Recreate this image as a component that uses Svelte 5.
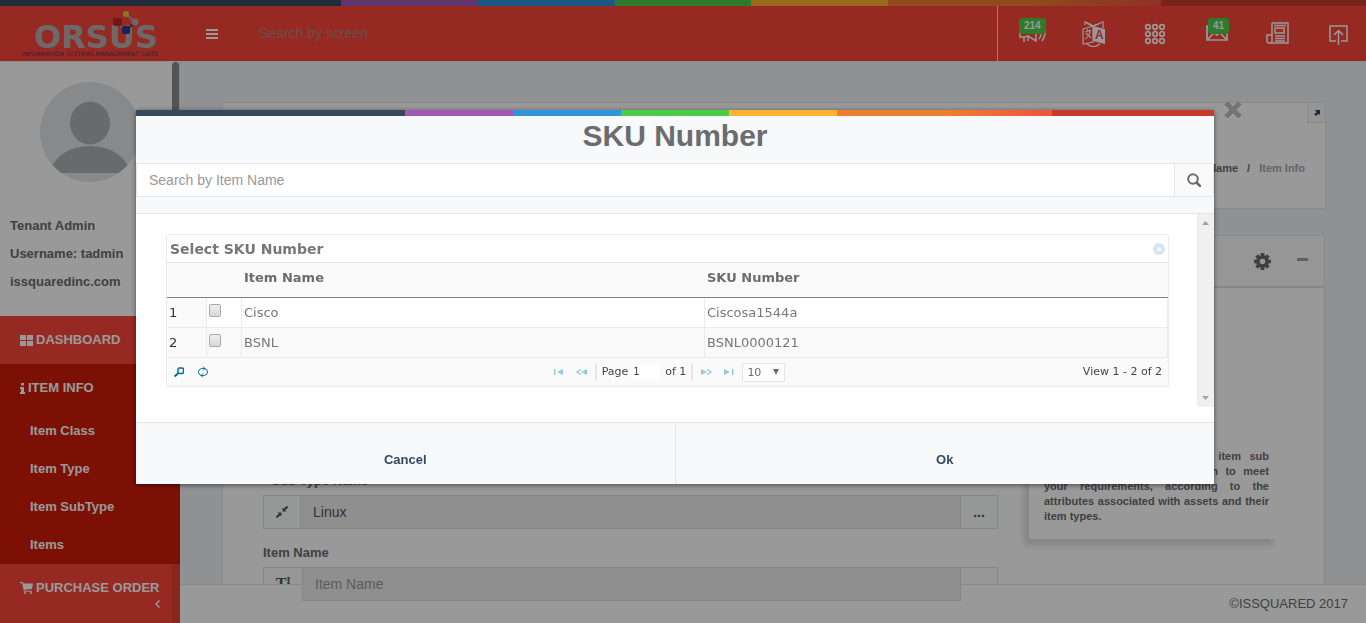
<script lang="ts">
  const subItems = ['Item Class', 'Item Type', 'Item SubType', 'Items'];
  const rows = [
    { id: 1, name: 'Cisco', sku: 'Ciscosa1544a' },
    { id: 2, name: 'BSNL', sku: 'BSNL0000121' }
  ];
  let checked = $state<Record<number, boolean>>({ 1: false, 2: false });
  let query = $state('');
  let page = $state('1');
</script>

<div class="page">
  <div class="strip"></div>
  <header>
    <a class="logo" href="#home" aria-label="Orsus home">
      <svg viewBox="0 0 180 55" width="180" height="55">
        <text x="34" y="42" class="word">ORSUS</text>
        <g stroke="#a8a0a8" stroke-width="2">
          <path d="M126 8l9 8M117 16l9 9" />
          <path d="M135 16l-9 9" stroke="#30439b" />
        </g>
        <rect x="113" y="12" width="9" height="8" rx="2" fill="#b82c22" />
        <circle cx="126" cy="8" r="3" fill="#f0c040" />
        <circle cx="135" cy="16" r="3.5" fill="#b5aaa5" />
        <rect x="122" y="20" width="8" height="8" rx="2" fill="#293a8c" />
        <text x="22" y="50" class="tag">INFORMATION SYSTEMS MANAGEMENT SUITE</text>
      </svg>
    </a>
    <button class="burger" aria-label="Toggle menu"><i></i><i></i><i></i></button>
    <input class="screen-search" type="text" placeholder="Search by screen" aria-label="Search by screen" />
    <nav class="tools" aria-label="Tools">
      <button aria-label="Announcements">
        <svg width="28" height="24" viewBox="0 0 28 24" fill="none" stroke="#fff" stroke-width="1.5">
          <path d="M1 8v7h4v5M5 15l4-1v5M9 14l8 5V5M20 17q3-4 2-9M23 19q4-6 3-12" />
        </svg>
        <span class="badge">214</span>
      </button>
      <button aria-label="Language">
        <svg width="24" height="26" viewBox="0 0 24 26" fill="none" stroke="#fff" stroke-width="1.2">
          <path d="M1 8l10-3v16L1 23zM3 4V1l7 3M11 5l10-4v6" />
          <path d="M3 1l8 4 6-2-7 2z" fill="#fff" />
          <path d="M11 5l12 3v15l-12-3z" fill="#fff" stroke="none" />
          <path d="M3 11l6-2M5 8l1 2M8 10q-1 6-5 8M4 12l5 5M5 23q6 5 13 0" />
          <text x="13" y="18" class="lang">A</text>
        </svg>
      </button>
      <button aria-label="Applications">
        <svg width="22" height="22" viewBox="0 0 22 22" fill="none" stroke="#fff" stroke-width="1.7">
          {#each [4, 11, 18] as y}{#each [4, 11, 18] as x}<circle cx={x} cy={y} r="2.3" />{/each}{/each}
        </svg>
      </button>
      <button aria-label="Messages">
        <svg width="24" height="20" viewBox="0 0 24 20" fill="none" stroke="#fff" stroke-width="1.7">
          <path d="M2 2h20v14H2zM2 2l10 9L22 2M2 16l7-7M22 16l-7-7" />
        </svg>
        <span class="badge mail">41</span>
      </button>
      <button aria-label="News">
        <svg width="24" height="24" viewBox="0 0 24 24" fill="none" stroke="#fff" stroke-width="1.5">
          <path d="M6 1h16v20H3q-2 0-2-2v-6h5M6 1v18q0 2-2 2M9 6h9v5H9zM8 3.500h12M9 14h10M9 16.500h10M9 19h10" />
        </svg>
      </button>
      <button aria-label="Log out">
        <svg width="22" height="24" viewBox="0 0 22 24" fill="none" stroke="#fff" stroke-width="1.5">
          <path d="M8 19H2V4h17v15h-6M10.500 23V9M6 13l4.500-4.500L15 13" />
        </svg>
      </button>
    </nav>
  </header>

  <div class="shell">
    <aside>
      <div class="profile">
        <svg class="avatar" width="100" height="100" viewBox="0 0 100 100">
          <defs><clipPath id="round"><circle cx="50" cy="50" r="50" /></clipPath></defs>
          <circle cx="50" cy="50" r="50" fill="#e3e5e6" />
          <g clip-path="url(#round)" fill="#adb3b5">
            <ellipse cx="50" cy="41" rx="20" ry="21.500" />
            <path d="M8 91q12-27 42-27t42 27z" />
          </g>
        </svg>
        <p>Tenant Admin</p>
        <p>Username: tadmin</p>
        <p>issquaredinc.com</p>
        <span class="thumb"></span>
      </div>
      <nav class="menu" aria-label="Main">
        <a href="#dashboard">
          <svg width="13" height="11" viewBox="0 0 13 11" fill="#fff"><path d="M0 0h6v5H0zM7 0h6v5H7zM0 6h6v5H0zM7 6h6v5H7z" /></svg>
          DASHBOARD
        </a>
        <div class="open">
          <a href="#item-info">
            <svg width="5" height="11" viewBox="0 0 5 11" fill="#fff"><path d="M1 0h3v2.500H1zM0 4h4v5h1v2H0V9h1V6H0z" /></svg>
            ITEM INFO
          </a>
          {#each subItems as item}
            <a class="sub" href="#item">{item}</a>
          {/each}
        </div>
        <a class="order" href="#purchase">
          <svg width="13" height="12" viewBox="0 0 13 12" fill="#fff"><path d="M0 0h3l.4 1.500H13L12 7l-7.500.8.3 1H12v1H4L2.200 1.200H0z" /><circle cx="5" cy="11" r="1" /><circle cx="11" cy="11" r="1" /></svg>
          PURCHASE ORDER
        </a>
        <svg class="chev" width="5" height="8" viewBox="0 0 5 8" fill="none" stroke="#fff" stroke-width="1.5"><path d="M4.500.5L1 4l3.500 3.500" /></svg>
      </nav>
    </aside>

    <main>
      <section class="crumbs">
        <button class="expand" aria-label="Expand">
          <svg width="6" height="6" viewBox="0 0 7 7" fill="#34495e"><path d="M1 0h6v6L5.200 4.300 2.500 7 0 5l3-2.500z" /></svg>
        </button>
        <nav aria-label="Breadcrumb"><a href="#name">Name</a><b>/</b><span>Item Info</span></nav>
      </section>

      <section class="panel">
        <div class="panel-head">
          <button aria-label="Settings">
            <svg width="17" height="17" viewBox="0 0 16 16">
              <g stroke="#6a6c6f" stroke-width="3.500"><path d="M8 0v16M0 8h16M2.400 2.400l11.200 11.200M13.600 2.400L2.400 13.600" /></g>
              <circle cx="8" cy="8" r="4.500" fill="none" stroke="#6a6c6f" stroke-width="3" /><circle cx="8" cy="8" r="2.600" fill="#fbfbfb" />
            </svg>
          </button>
          <button aria-label="Collapse"><i></i></button>
        </div>
        <div class="panel-body">
          <form>
            <label for="subtype"><em>*</em> Sub Type Name</label>
            <div class="group">
              <span class="addon">
                <svg width="12" height="12" viewBox="0 0 12 12" fill="#555" stroke="#555"><path d="M6.500 1.500v4h4zM5.500 10.500v-4h-4z" stroke="none" /><path d="M8 4l3.500-3.500M4 8L.5 11.500" stroke-width="2" /></svg>
              </span>
              <input id="subtype" type="text" value="Linux" readonly />
              <button class="addon more" type="button" aria-label="Browse sub types">...</button>
            </div>
            <label for="itemname">Item Name</label>
            <div class="group">
              <span class="addon wide">T<small>I</small></span>
              <input id="itemname" type="text" placeholder="Item Name" readonly />
              <span class="addon more"></span>
            </div>
          </form>
          <div class="info">
            <p class="fill">Select the proper item type, item sub</p>
            <p class="fill">type and further customization to meet</p>
            <p>your requirements, according to the attributes associated with assets and their item types.</p>
          </div>
        </div>
      </section>
      <footer>©ISSQUARED 2017</footer>
    </main>
  </div>
</div>

<div class="overlay">
  <div class="modal" role="dialog" aria-modal="true" aria-labelledby="title">
    <div class="strip"></div>
    <button class="close" aria-label="Close">
      <svg width="20" height="20" viewBox="0 0 20 20" fill="none" stroke-width="5"><path d="M3 4l14 14M17 4L3 18" stroke="#aaa" /><path d="M3 3l14 14M17 3L3 17" stroke="#747474" /></svg>
    </button>
    <div class="modal-head">
      <h1 id="title">SKU Number</h1>
      <div class="finder">
        <input type="text" placeholder="Search by Item Name" aria-label="Search by Item Name" bind:value={query} />
        <button aria-label="Search">
          <svg width="14" height="14" viewBox="0 0 14 14" fill="none" stroke="#6a6c6f"><circle cx="6" cy="6" r="4.800" stroke-width="2" /><path d="M9.500 9.500L13 13" stroke-width="2.500" stroke-linecap="round" /></svg>
        </button>
      </div>
    </div>
    <div class="modal-body">
      <div class="content">
        <div class="grid">
          <div class="grid-title">
            <span>Select SKU Number</span>
            <button aria-label="Collapse table">
              <svg width="12" height="12" viewBox="0 0 12 12"><circle cx="6" cy="6" r="6" fill="#d4e6f2" /><path d="M3 7.500l3-3.500 3 3.500z" fill="#fff" /></svg>
            </button>
          </div>
          <table>
            <colgroup><col class="c-no" /><col class="c-tick" /><col /><col /></colgroup>
            <thead><tr><th></th><th></th><th>Item Name</th><th>SKU Number</th></tr></thead>
            <tbody>
              {#each rows as row}
                <tr>
                  <td class="no">{row.id}</td>
                  <td class="tick"><input type="checkbox" aria-label={row.name} bind:checked={checked[row.id]} /></td>
                  <td>{row.name}</td>
                  <td>{row.sku}</td>
                </tr>
              {/each}
            </tbody>
          </table>
          <div class="pager">
            <div class="acts">
              <button aria-label="Find records"><svg width="10" height="10" viewBox="0 0 10 10" fill="none" stroke="#00719c"><rect x="4" y="1" width="5.500" height="5.500" rx="1.500" stroke-width="1.500" /><path d="M4 6.500L.5 9.500" stroke-width="2" /></svg></button>
              <button aria-label="Reload"><svg width="10" height="12" viewBox="0 0 10 12" fill="none" stroke="#00719c"><path d="M3.500 9.500Q.5 9 .5 6t3-3.500h3M5 .5l2 2-2 2M6.500 2.500Q9.500 3 9.500 6t-3 3.500h-3M5 7.500l-2 2 2 2" /></svg></button>
            </div>
            <div class="pages">
              <button aria-label="First page"><svg width="10" height="6" viewBox="0 0 10 6" fill="#9cc9d8"><path d="M0 0h1.500v6H0zM9 0v6L3 3z" /></svg></button>
              <button aria-label="Previous page"><svg width="11" height="6" viewBox="0 0 11 6" fill="#9cc9d8"><path d="M11 0v6L5 3z" /><path d="M5 .5L1 3l4 2.500" fill="none" stroke="#9cc9d8" stroke-width="1.300" /></svg></button>
              <i></i>
              <label>Page <input type="text" bind:value={page} /></label>
              <span>of 1</span>
              <i></i>
              <button aria-label="Next page"><svg width="11" height="6" viewBox="0 0 11 6" fill="#9cc9d8"><path d="M0 0v6l6-3z" /><path d="M6 .5L10 3 6 5.500" fill="none" stroke="#9cc9d8" stroke-width="1.300" /></svg></button>
              <button aria-label="Last page"><svg width="10" height="6" viewBox="0 0 10 6" fill="#9cc9d8"><path d="M8 0h1.500v6H8zM0 0v6l6-3z" /></svg></button>
              <div class="size">
                <select aria-label="Rows per page"><option>10</option><option>20</option><option>30</option></select>
                <svg width="6" height="6" viewBox="0 0 6 6" fill="#6a6c6f"><path d="M0 0h6L3 6z" /></svg>
              </div>
            </div>
            <span class="count">View 1 - 2 of 2</span>
          </div>
        </div>
      </div>
      <div class="scroll" aria-hidden="true">
        <svg width="7" height="4" viewBox="0 0 7 4" fill="#a3a3a3"><path d="M0 4h7L3.500 0z" /></svg>
        <svg width="7" height="4" viewBox="0 0 7 4" fill="#a3a3a3"><path d="M0 0h7L3.500 4z" /></svg>
      </div>
    </div>
    <div class="modal-foot">
      <button>Cancel</button>
      <button>Ok</button>
    </div>
  </div>
</div>

<style>
  :global(body) {
    margin: 0;
    overflow: hidden;
    font: 13px/20px "Liberation Sans", Arial, sans-serif;
    color: #6a6c6f;
  }
  * { box-sizing: border-box; }
  button { border: 0; padding: 0; background: none; font: inherit; color: inherit; display: flex; align-items: center; justify-content: center; }
  input, select { font: inherit; color: inherit; border: 0; border-radius: 0; outline: 0; }
  a { color: inherit; text-decoration: none; }
  p { margin: 0; }
  svg { display: block; flex: none; }

  .page { height: 100vh; display: flex; flex-direction: column; overflow: hidden; background: #f0f2f4; }
  .strip {
    height: 6px;
    flex: none;
    background: linear-gradient(to right, #34495e 25%, #a259b3 25%, #a259b3 35%, #2f95d9 35%, #2f95d9 45%, #4dcc48 45%, #4dcc48 55%, #ffb330 55%, #ffb330 65%, #ed7f30 65%, #ed7f30 75%, #f0523e 85%, #c63a2c 85%);
  }

  header { height: 55px; flex: none; display: flex; align-items: stretch; background: #fb4639; color: #fff; }
  .word { font: bold 32px "DejaVu Sans", sans-serif; fill: #b8b0b0; }
  .tag { font: 6px "DejaVu Sans", sans-serif; fill: #5b3068; }
  .lang { font: bold 12px "Liberation Sans", sans-serif; fill: #fb4639; stroke: none; }
  .burger { width: 64px; flex-direction: column; gap: 2px; }
  .burger i { width: 12px; height: 2px; background: #fff; }
  .screen-search { flex: 1; min-width: 0; padding: 0 15px 2px; background: none; font-size: 14px; }
  .screen-search::placeholder { color: #a88482; }
  .tools { width: 369px; border-left: 1px solid #e8e0e0; display: grid; grid-template-columns: repeat(6, 1fr); }
  .tools button { position: relative; padding-left: 8px; }
  .badge { position: absolute; top: 12px; left: 21px; padding: 0 5px; border-radius: 3px; background: #4dcc48; font: bold 10px/16px "Liberation Sans", sans-serif; }
  .badge.mail { left: 26px; }

  .shell { flex: 1; min-height: 0; display: flex; border-top: 1px solid #eaeaea; }
  aside { width: 180px; flex: none; display: flex; flex-direction: column; background: #fff; color: #6a6c6f; font-weight: bold; }
  .profile { position: relative; height: 254px; flex: none; padding: 20px 0 0 10px; line-height: 28px; border-right: 1px solid #e4e5e7; }
  .avatar { margin: 0 0 30px 30px; }
  .thumb { position: absolute; top: 0; right: 0; width: 7px; height: 170px; border-radius: 7px; background: #8c8c8c; }
  .menu { flex: 1; background: #fb4639; color: #fff; border-right: 8px solid #e74034; }
  .menu a { display: flex; align-items: center; gap: 3px; height: 48px; padding-left: 20px; }
  .menu > a { margin-right: -8px; }
  .menu .open { height: 200px; margin-right: -8px; background: #cf1b09; }
  .menu a.sub { height: 38px; padding-left: 30px; }
  .chev { margin: -12px 0 0 155px; }

  main { position: relative; flex: 1; min-width: 0; padding: 40px 40px 0 42px; }
  .crumbs { height: 107px; border: 1px solid #e4e5e7; background: #fff; display: flex; flex-direction: column; align-items: flex-end; gap: 35px; font: bold 11px/20px "Liberation Sans", sans-serif; }
  .expand { width: 18px; height: 20px; border: 1px solid #e4e5e7; border-width: 0 0 1px 1px; background: #f7f9fa; }
  .crumbs nav { display: flex; gap: 9px; padding-right: 20px; }
  .crumbs span { color: #a8a9ab; }
  .panel { margin: 26px 1px 0 0; height: 420px; border: 1px solid #e4e5e7; background: #fff; }
  .panel-head { height: 52px; border-bottom: 2px solid #e1e2e4; background: #fbfbfb; display: flex; align-items: center; justify-content: flex-end; gap: 26px; padding: 1px 16px 0 0; }
  .panel-head i { width: 11px; height: 3px; margin-bottom: 4px; background: #9fa1a4; }
  .panel-body { display: flex; align-items: flex-start; gap: 31px; padding: 0 46px 0 40px; }
  form { flex: 1; min-width: 0; padding-top: 183px; }
  form label { display: block; margin-bottom: 4px; font-weight: bold; }
  em { color: #c0392b; font-style: normal; }
  .group { display: flex; height: 34px; margin-bottom: 14px; }
  .addon { width: 38px; flex: none; display: flex; align-items: center; justify-content: center; border: 1px solid #e0e3e3; background: #f9fdfb; font: bold 14px/20px "Liberation Sans", sans-serif; color: #555; }
  .addon.wide { width: 40px; font-family: "Liberation Serif", serif; font-size: 16px; }
  .addon small { font-size: 10px; margin-bottom: 6px; }
  .group input { position: relative; z-index: 2; flex: 1; min-width: 0; margin: 0 -1px; padding: 0 12px; border: 1px solid #e1e1e1; background: #eee; font-size: 14px; color: #555; }
  .group input::placeholder { color: #999; }
  .info { width: 249px; flex: none; margin-top: 146px; padding: 15px 9px 15px 15px; background: #fff; box-shadow: -5px 6px 6px #ddd; font: bold 11px/15px "Liberation Sans", sans-serif; text-align: justify; }
  .fill { text-align-last: justify; }
  footer { position: absolute; left: 0; right: 0; bottom: 0; height: 39px; padding: 9px 18px; border-top: 1px solid #e4e5e7; background: #fff; text-align: right; }

  .overlay { position: fixed; inset: 0; z-index: 10; padding: 110px 152px 0 136px; background: rgba(0, 0, 0, 0.4); }
  .modal { position: relative; background: #fff; box-shadow: 0 1px 5px rgba(0, 0, 0, 0.5); }
  .close { position: absolute; top: -10px; right: -29px; }
  .modal-head { padding-bottom: 16px; border-bottom: 1px solid #e4e5e7; background: #f7f9fb; }
  h1 { margin: 0; padding: 3px 0 10px; font-size: 30px; line-height: 34px; text-align: center; }
  .finder { display: flex; height: 34px; border: 1px solid #e4e5e7; border-radius: 0 3px 3px 0; background: #fff; }
  .finder input { flex: 1; min-width: 0; padding: 0 12px; background: none; font-size: 14px; }
  .finder input::placeholder { color: #999; }
  .finder button { width: 39px; border-left: 1px solid #e4e5e7; background: #fafafa; }
  .modal-body { display: flex; padding-bottom: 15px; }
  .content { flex: 1; min-width: 0; padding: 20px 28px 20px 30px; }
  .scroll { width: 17px; display: flex; flex-direction: column; justify-content: space-between; align-items: center; padding: 7px 0; background: #f0f0f0; }

  .grid { border: 1px solid #ebebeb; border-radius: 3px 3px 0 0; font: 13px/20px "DejaVu Sans", Verdana, sans-serif; }
  .grid-title { display: flex; align-items: center; justify-content: space-between; height: 28px; padding: 0 3px; border-bottom: 1px solid #e4e5e7; font-size: 14px; font-weight: bold; color: #777; }
  table { width: 100%; table-layout: fixed; border-collapse: separate; border-spacing: 0; }
  .c-no { width: 40px; }
  .c-tick { width: 35px; }
  th { height: 35px; padding: 0 2px 4px; background: #fafafa; border-bottom: 1px solid #7f8381; text-align: left; }
  td { height: 30px; padding: 0 2px; border: 1px solid #ebebeb; border-width: 0 1px 1px 0; color: #777; }
  tbody tr:nth-child(even), td.no { background: #fafafa; }
  td.no { color: #333; }
  td.tick { vertical-align: top; padding-top: 6px; }
  td input { display: block; appearance: none; width: 12px; height: 13px; margin: 0; border: 1px solid #aaa; border-radius: 2px; background: linear-gradient(#eee, #d8d8d8); }
  td input:checked { background: #00719c; }
  .pager { height: 28px; display: grid; grid-template-columns: 1fr auto 1fr; align-items: center; padding: 0 6px 0 7px; background: #fafafa; font-size: 11px; color: #444; }
  .acts { display: flex; gap: 14px; }
  .pages { display: flex; align-items: center; gap: 5px; }
  .pages button { width: 17px; }
  .pages i { width: 2px; height: 18px; background: #e6e6e6; }
  .pages label { display: flex; align-items: center; }
  .pages label input { width: 30px; height: 14px; margin-left: 2px; padding: 0 3px; background: #fff; font-size: 10px; }
  .size { position: relative; }
  select { appearance: none; display: block; width: 43px; height: 19px; padding: 0 4px; border: 1px solid #e4e5e7; background: #fff; color: #6a6c6f; line-height: 17px; }
  .size svg { position: absolute; right: 6px; top: 6px; pointer-events: none; }
  .count { text-align: right; }

  .modal-foot { display: flex; border-top: 1px solid #e4e5e7; background: #f7f9fb; color: #34495e; }
  .modal-foot button { flex: 1; height: 61px; padding-top: 12px; font-weight: bold; }
  .modal-foot button + button { border-left: 1px solid #e4e5e7; }
</style>
